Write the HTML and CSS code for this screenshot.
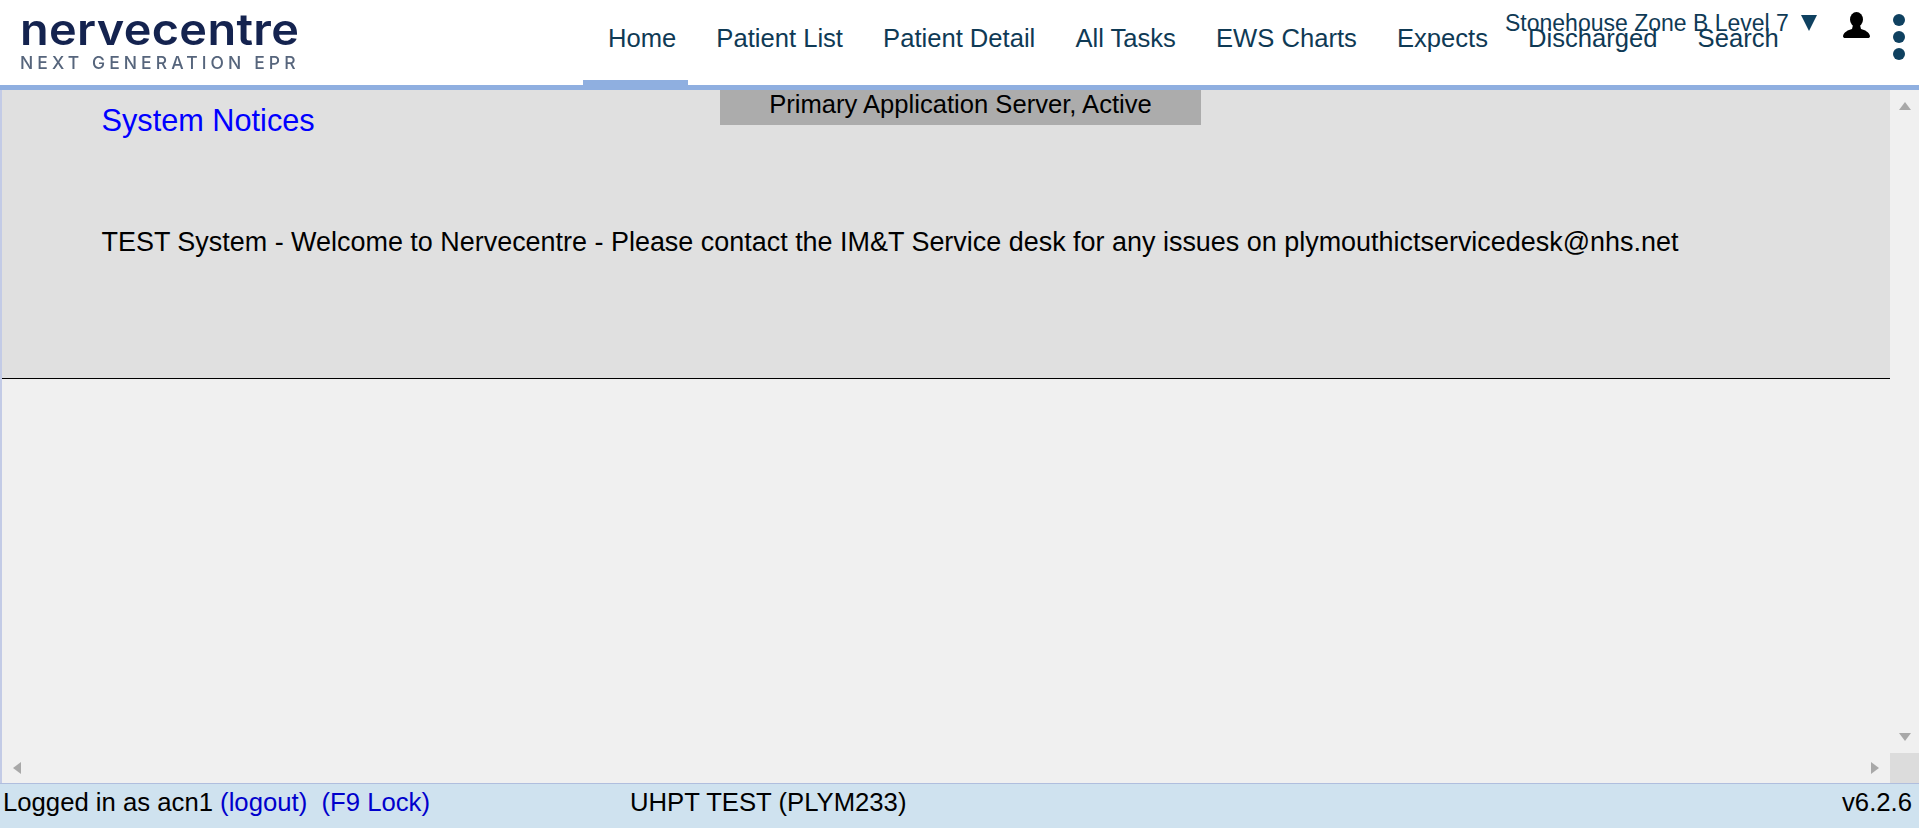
FILE: index.html
```html
<!DOCTYPE html>
<html lang="en">
<head>
    <meta charset="UTF-8">
    <title>Nervecentre</title>
    <link rel="stylesheet" href="styles.css">
</head>
<body>
    <div class="page">
        <!-- top bar -->
        <header class="topbar">
            <div class="logo">
                <div class="logo-name">nervecentre</div>
                <div class="logo-tag">NEXT GENERATION EPR</div>
            </div>
            <nav class="nav">
                <a class="nav-item active">Home</a>
                <a class="nav-item">Patient List</a>
                <a class="nav-item">Patient Detail</a>
                <a class="nav-item">All Tasks</a>
                <a class="nav-item">EWS Charts</a>
                <a class="nav-item">Expects</a>
                <a class="nav-item">Discharged</a>
                <a class="nav-item">Search</a>
            </nav>
            <!-- location sits over the nav, same as the real app -->
            <div class="location">Stonehouse Zone B Level 7 <span class="location-arrow"></span></div>
            <svg class="user-icon" viewBox="0 0 27 27" width="27" height="27">
                <ellipse cx="13.5" cy="7.5" rx="6.5" ry="7.5" fill="#000"/>
                <path d="M10 13 L17 13 L18 17 C22 18 26 20 27 24 C27 25.5 26 26 25 26 L2 26 C1 26 0 25.5 0 24 C1 20 5 18 9 17 Z" fill="#000"/>
            </svg>
            <div class="menu-dots"><span></span><span></span><span></span></div>
        </header>

        <div class="server-status">Primary Application Server, Active</div>

        <main class="content">
            <div class="scroll-view">
                <section class="notices">
                    <h2 class="notices-title">System Notices</h2>
                    <p class="notices-text">TEST System - Welcome to Nervecentre - Please contact the IM&amp;T Service desk for any issues on plymouthictservicedesk@nhs.net</p>
                </section>
            </div>
            <div class="scrollbar-v">
                <span class="arrow arrow-up"></span>
                <span class="arrow arrow-down"></span>
            </div>
            <div class="scrollbar-h">
                <span class="arrow arrow-left"></span>
                <span class="arrow arrow-right"></span>
            </div>
            <div class="scroll-corner"></div>
        </main>

        <footer class="statusbar">
            <div class="status-left">Logged in as acn1 <a class="status-link">(logout)</a>&nbsp; <a class="status-link">(F9 Lock)</a></div>
            <div class="status-site">UHPT TEST (PLYM233)</div>
            <div class="status-version">v6.2.6</div>
        </footer>
    </div>
</body>
</html>
```

FILE: styles.css
```css
html, body {
    margin: 0;
    height: 100%;
    overflow: hidden;
}

body {
    font-family: 'Liberation Sans', Arial, sans-serif;
    color: #000;
}

.page {
    position: relative;
    display: flex;
    flex-direction: column;
    height: 100vh;
}

/* top bar */
.topbar {
    position: relative;
    display: flex;
    flex: none;
    height: 85px;
    background-color: #fff;
    border-bottom: 5px solid #8fafe0;
}

.logo {
    width: 583px;
    flex: none;
    padding: 7px 0 0 20px;
    box-sizing: border-box;
    filter: blur(0.5px);
}

.logo-name {
    font-family: 'Inter', sans-serif;
    font-weight: 600;
    font-size: 43px;
    line-height: 44px;
    letter-spacing: 0.3px;
    color: #14234f;
    transform: scaleX(1.09);
    transform-origin: left center;
}

.logo-tag {
    margin-top: 2px;
    font-family: 'Inter', sans-serif;
    font-weight: 500;
    font-size: 17.5px;
    line-height: 20px;
    letter-spacing: 4.1px;
    color: #56657c;
    white-space: nowrap;
}

.nav {
    display: flex;
}

.nav-item {
    padding: 24px 13px 0 27.1px;
    font-size: 25.6px;
    line-height: 29px;
    color: #0f3a55;
    white-space: nowrap;
}

.nav-item.active {
    padding-left: 25px;
    padding-right: 11.8px;
    margin-right: 1.2px;
    box-shadow: inset 0 -5px 0 #8fafe0;
}

.location {
    position: absolute;
    top: 9px;
    left: 1505px;
    font-size: 23px;
    line-height: 28px;
    color: #0f3a55;
    white-space: nowrap;
}

.location-arrow {
    display: inline-block;
    margin-left: 6px;
    border-left: 8px solid transparent;
    border-right: 8px solid transparent;
    border-top: 16px solid #0f4160;
}

.user-icon {
    position: absolute;
    top: 12px;
    left: 1843px;
}

.menu-dots {
    position: absolute;
    top: 14px;
    left: 1893px;
    display: flex;
    flex-direction: column;
    gap: 5px;
}

.menu-dots span {
    width: 12px;
    height: 12px;
    border-radius: 50%;
    background-color: #0f4160;
}

/* grey tab hanging under the bar */
.server-status {
    position: absolute;
    top: 90px;
    left: 720px;
    width: 481px;
    height: 35px;
    background-color: #acacac;
    font-size: 25.6px;
    line-height: 28px;
    text-align: center;
}

/* main area with fake scrollbars */
.content {
    flex: 1;
    display: grid;
    grid-template-columns: 1fr 29px;
    grid-template-rows: 1fr 30px;
    min-height: 0;
    background-color: #f0f0f0;
    border-left: 2px solid #c3cbe6;
}

.scroll-view {
    overflow: hidden;
}

.notices {
    height: 288px;
    padding-left: 99.5px;
    background-color: #e0e0e0;
    border-bottom: 1px solid #000;
    box-sizing: content-box;
}

.notices-title {
    margin: 0;
    padding-top: 13px;
    font-size: 30.7px;
    line-height: 36px;
    font-weight: normal;
    color: #0000ff;
}

.notices-text {
    margin: 88px 0 0;
    font-size: 26.95px;
    line-height: 31px;
}

.scrollbar-v,
.scrollbar-h {
    position: relative;
    display: flex;
    justify-content: space-between;
    background-color: #f0f0f0;
}

.scrollbar-v {
    flex-direction: column;
    align-items: center;
    padding: 12px 0 12px;
}

.scrollbar-h {
    align-items: center;
    padding: 0 11px;
}

.scroll-corner {
    background-color: #dcdcdc;
}

.arrow {
    width: 0;
    height: 0;
}

.arrow-up {
    border-left: 6.5px solid transparent;
    border-right: 6.5px solid transparent;
    border-bottom: 8px solid #a8a8a8;
}

.arrow-down {
    border-left: 6.5px solid transparent;
    border-right: 6.5px solid transparent;
    border-top: 8px solid #a8a8a8;
}

.arrow-left {
    border-top: 6.5px solid transparent;
    border-bottom: 6.5px solid transparent;
    border-right: 8px solid #a8a8a8;
}

.arrow-right {
    border-top: 6.5px solid transparent;
    border-bottom: 6.5px solid transparent;
    border-left: 8px solid #a8a8a8;
}

/* status bar */
.statusbar {
    display: flex;
    flex: none;
    height: 44px;
    padding: 0 7px 0 3px;
    background-color: #cfe2ef;
    border-top: 1px solid #b0bede;
    font-size: 25.7px;
    line-height: 36px;
}

.status-left {
    width: 627px;
    flex: none;
}

.status-link {
    color: #0000cc;
}

.status-site {
    flex: 1;
}
```
